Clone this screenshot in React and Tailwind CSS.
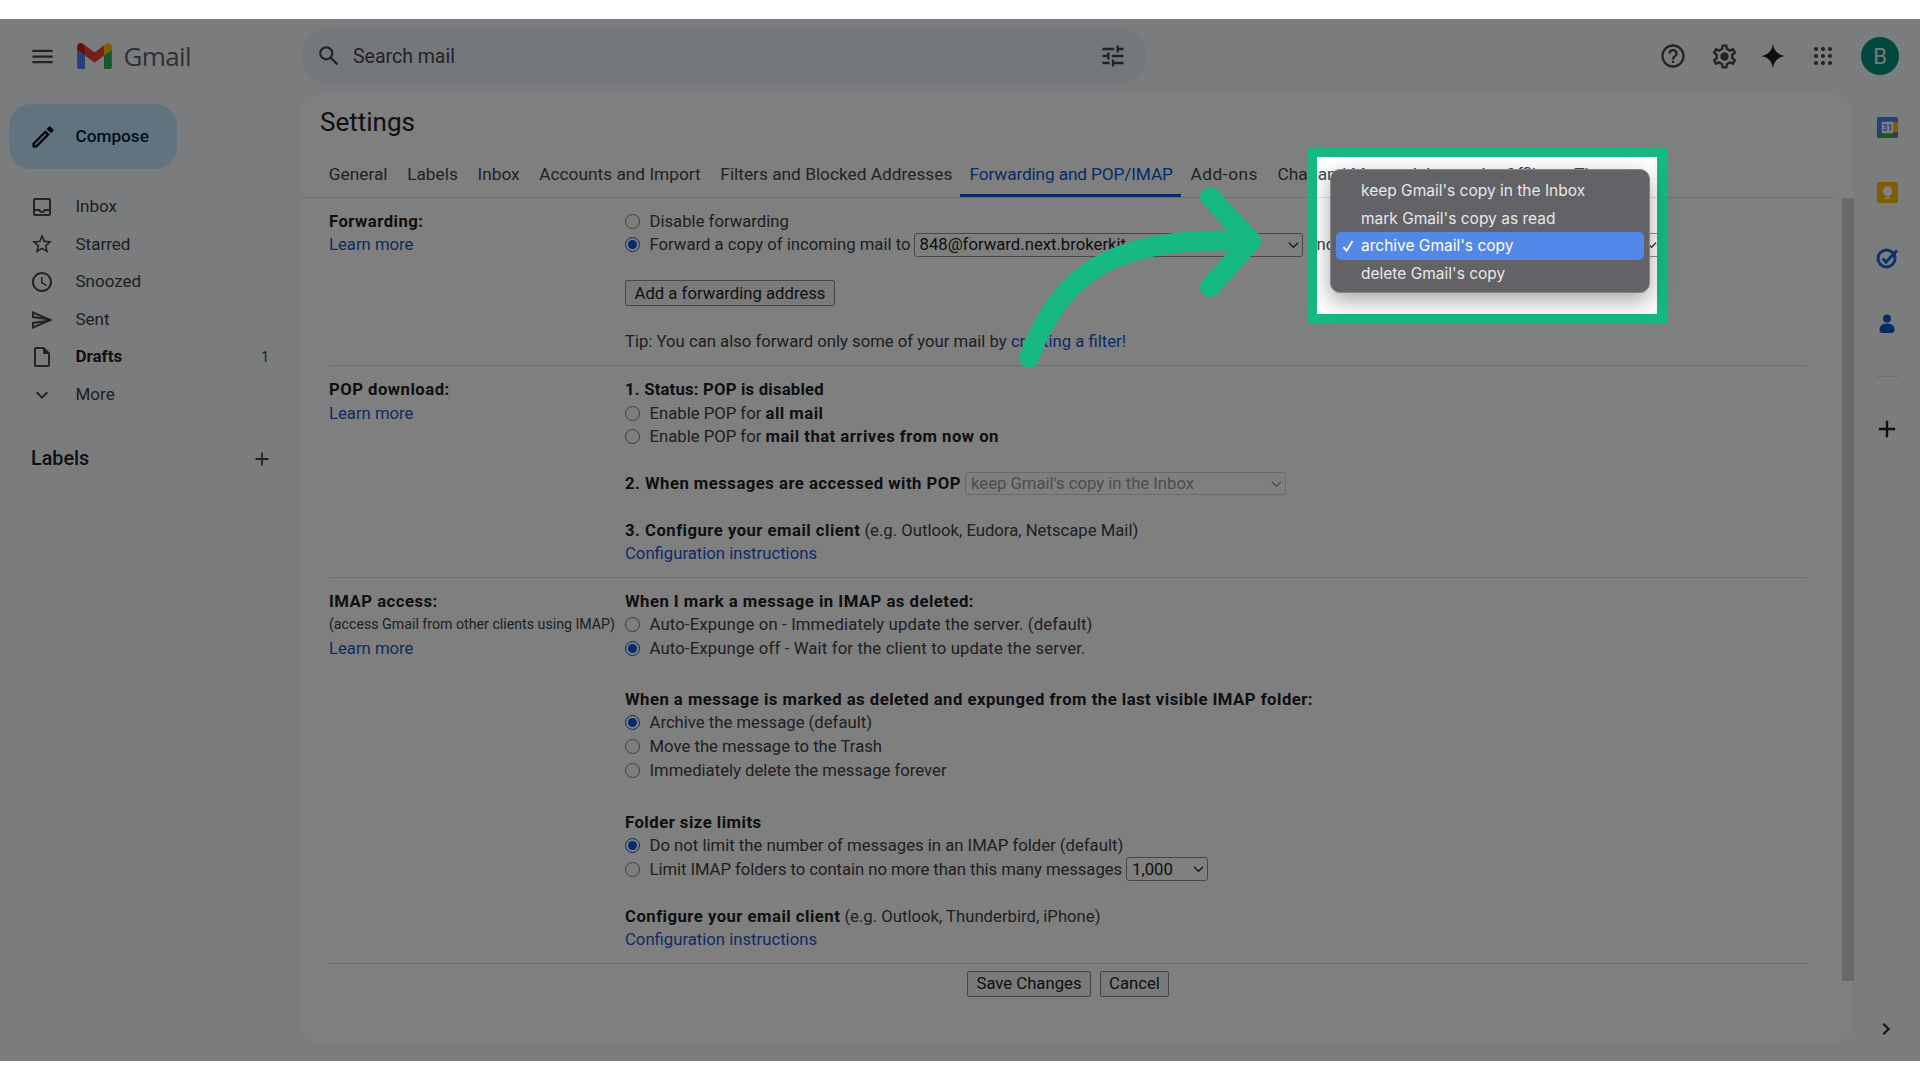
import React from "react";

const P = ({ d, className = "" }) => (
  <svg viewBox="0 0 24 24" className={className} fill="currentColor"><path d={d} /></svg>
);
const icons = {
  inbox: "M19 3H5c-1.1 0-2 .9-2 2v14c0 1.1.9 2 2 2h14c1.1 0 2-.9 2-2V5c0-1.1-.9-2-2-2zm0 16H5v-3h3.56c.69 1.19 1.97 2 3.45 2s2.75-.81 3.45-2H19v3zm0-5h-4.99c0 1.1-.9 2-2 2s-2-.9-2-2H5V5h14v9z",
  star: "M22 9.24l-7.19-.62L12 2 9.19 8.63 2 9.24l5.46 4.73L5.82 21 12 17.27 18.18 21l-1.63-7.03L22 9.24zM12 15.4l-3.76 2.27 1-4.28-3.32-2.88 4.38-.38L12 6.1l1.71 4.04 4.38.38-3.32 2.88 1 4.28L12 15.4z",
  clock: "M11.99 2C6.47 2 2 6.48 2 12s4.47 10 9.99 10C17.52 22 22 17.52 22 12S17.52 2 11.99 2zM12 20c-4.42 0-8-3.58-8-8s3.58-8 8-8 8 3.58 8 8-3.58 8-8 8zm.5-13H11v6l5.25 3.15.75-1.23-4.5-2.67z",
  send: "M4.01 6.03l7.51 3.22-7.52-1 .01-2.22m7.5 8.72L4 17.97v-2.22l7.51-1M2.01 3L2 10l15 2-15 2 .01 7L23 12 2.01 3z",
  draft: "M14 2H6c-1.1 0-1.99.9-1.99 2L4 20c0 1.1.89 2 1.99 2H18c1.1 0 2-.9 2-2V8l-6-6zM6 20V4h7v5h5v11H6z",
  more: "M16.59 8.59L12 13.17 7.41 8.59 6 10l6 6 6-6z",
  pencil: "M14.06 9.02l.92.92L5.92 19H5v-.92l9.06-9.06M17.66 3c-.25 0-.51.1-.7.29l-1.83 1.83 3.75 3.75 1.83-1.83c.39-.39.39-1.02 0-1.41l-2.34-2.34c-.2-.2-.45-.29-.71-.29zm-3.6 3.19L3 17.25V21h3.75L17.81 9.94l-3.75-3.75z",
  help: "M11 18h2v-2h-2v2zm1-16C6.48 2 2 6.48 2 12s4.48 10 10 10 10-4.48 10-10S17.52 2 12 2zm0 18c-4.41 0-8-3.59-8-8s3.59-8 8-8 8 3.59 8 8-3.59 8-8 8zm0-14c-2.21 0-4 1.79-4 4h2c0-1.1.9-2 2-2s2 .9 2 2c0 2-3 1.75-3 5h2c0-2.25 3-2.5 3-5 0-2.21-1.79-4-4-4z",
  gear: "M19.43 12.98c.04-.32.07-.64.07-.98 0-.34-.03-.66-.07-.98l2.11-1.65c.19-.15.24-.42.12-.64l-2-3.46c-.09-.16-.26-.25-.44-.25-.06 0-.12.01-.17.03l-2.49 1c-.52-.4-1.08-.73-1.69-.98l-.38-2.65C14.46 2.18 14.25 2 14 2h-4c-.25 0-.46.18-.49.42l-.38 2.65c-.61.25-1.17.59-1.69.98l-2.49-1c-.06-.02-.12-.03-.18-.03-.17 0-.34.09-.43.25l-2 3.46c-.13.22-.07.49.12.64l2.11 1.65c-.04.32-.07.65-.07.98 0 .33.03.66.07.98l-2.11 1.65c-.19.15-.24.42-.12.64l2 3.46c.09.16.26.25.44.25.06 0 .12-.01.17-.03l2.49-1c.52.4 1.08.73 1.69.98l.38 2.65c.03.24.24.42.49.42h4c.25 0 .46-.18.49-.42l.38-2.65c.61-.25 1.17-.59 1.69-.98l2.49 1c.06.02.12.03.18.03.17 0 .34-.09.43-.25l2-3.46c.12-.22.07-.49-.12-.64l-2.11-1.65zm-1.98-1.71c.04.31.05.52.05.73 0 .21-.02.43-.05.73l-.14 1.13.89.7 1.08.84-.7 1.21-1.27-.51-1.04-.42-.9.68c-.43.32-.84.56-1.25.73l-1.06.43-.16 1.13-.2 1.35h-1.4l-.19-1.35-.16-1.13-1.06-.43c-.43-.18-.83-.41-1.23-.71l-.91-.7-1.06.43-1.27.51-.7-1.21 1.08-.84.89-.7-.14-1.13c-.03-.31-.05-.54-.05-.74s.02-.43.05-.73l.14-1.13-.89-.7-1.08-.84.7-1.21 1.27.51 1.04.42.9-.68c.43-.32.84-.56 1.25-.73l1.06-.43.16-1.13.2-1.35h1.39l.19 1.35.16 1.13 1.06.43c.43.18.83.41 1.23.71l.91.7 1.06-.43 1.27-.51.7 1.21-1.07.85-.89.7.14 1.13zM12 8.5a3.5 3.5 0 100 7 3.5 3.5 0 000-7z",
  search: "M20.49 19l-5.73-5.73C15.53 12.2 16 10.91 16 9.5 16 5.91 13.09 3 9.5 3S3 5.91 3 9.5 5.91 16 9.5 16c1.41 0 2.7-.47 3.77-1.24L19 20.49 20.49 19zM5 9.5C5 7.01 7.01 5 9.5 5S14 7.01 14 9.5 11.99 14 9.5 14 5 11.99 5 9.5z",
  tune: "M3 17v2h6v-2H3zM3 5v2h10V5H3zm10 16v-2h8v-2h-8v-2h-2v6h2zM7 9v2H3v2h4v2h2V9H7zm14 4v-2H11v2h10zm-6-4h2V7h4V5h-4V3h-2v6z",
  star4: "M12 1.5C12.6 7.6 16.4 11.4 22.5 12 16.4 12.6 12.6 16.4 12 22.5 11.4 16.4 7.6 12.6 1.5 12 7.6 11.4 11.4 7.6 12 1.5z",
  plus: "M19 13h-6v6h-2v-6H5v-2h6V5h2v6h6v2z",
  menu: "M3 18h18v-2H3v2zm0-5h18v-2H3v2zm0-7v2h18V6H3z",
  chevR: "M8.59 16.59L13.17 12 8.59 7.41 10 6l6 6-6 6z",
};

const Chevron = ({ className = "" }) => (
  <svg viewBox="0 0 12 8" className={`w-[11px] h-[8px] ${className}`} fill="none" stroke="currentColor" strokeWidth="1.4"><path d="M1 1.5l5 5 5-5" /></svg>
);

const NavItem = ({ icon, label, bold, count }) => (
  <div className="flex items-center h-[37.6px] pl-[30px] pr-[32px] text-[17px] text-[#3c4043]">
    <span className="w-[24px] h-[24px] flex items-center justify-center mr-[21.5px]">
      <P d={icons[icon]} className="w-[24px] h-[24px] text-[#444746]" />
    </span>
    <span className={bold ? "font-bold text-[#202124]" : ""}>{label}</span>
    {count && <span className="ml-auto text-[14px]">{count}</span>}
  </div>
);

const Tab = ({ children, active, className = "px-[9.8px]" }) => (
  <div className={`pt-[5px] h-[46px] flex items-center border-b-[3px] ${className} ${active ? "border-[#0b57d0] text-[#0b57d0]" : "border-transparent text-[#444746]"}`}>
    {children}
  </div>
);

const Line = ({ children, className = "" }) => (
  <div className={`h-[23.6px] flex items-center whitespace-nowrap ${className}`}>{children}</div>
);
const Radio = ({ on, children, className = "" }) => (
  <Line className={className}>
    <span className={`w-[15px] h-[15px] rounded-full border shrink-0 flex items-center justify-center mr-[9.5px] bg-white ${on ? "border-[#0b57d0] border-[1.5px]" : "border-[#767676]"}`}>
      {on && <span className="w-[9px] h-[9px] rounded-full bg-[#0b57d0]" />}
    </span>
    {children}
  </Line>
);
const A = ({ children }) => <span className="text-[#1a56c4]">{children}</span>;
const B = ({ children, className = "tracking-[0.48px]" }) => <b className={`font-bold text-[#202124] ${className}`}>{children}</b>;
const Select = ({ w, children, disabled }) => (
  <div className={`${w} h-[23.6px] border rounded-[3px] flex items-center justify-between pl-[5px] pr-[3px] overflow-hidden whitespace-nowrap shrink-0 tracking-normal ${disabled ? "border-[#d4d4d4] text-[#9a9a9a]" : "border-[#8f8f8f] text-[#202124]"}`}>
    <span>{children}</span>
    <Chevron className={`shrink-0 ${disabled ? "text-[#9a9a9a]" : "text-[#333]"}`} />
  </div>
);
const Btn = ({ w, children, className = "" }) => (
  <div className={`${w} h-[26px] border border-[#8a8a8a] rounded-[2px] bg-[#f5f5f5] flex items-center justify-center text-[#202124] ${className}`}>{children}</div>
);
const Section = ({ left, children, className = "pb-[11.5px]" }) => (
  <div className={`flex border-b border-[#e0e0e0] pt-[11.5px] ${className}`}>
    <div className="w-[296px] shrink-0">{left}</div>
    <div className="flex-1 min-w-0">{children}</div>
  </div>
);
const RailIcon = ({ children, className = "" }) => (
  <div className={`w-[24px] h-[24px] flex items-center justify-center ${className}`}>{children}</div>
);

export default function App() {
  return (
    <div className="relative h-screen w-full overflow-hidden bg-white font-['Roboto',sans-serif]">
      <div className="mt-[18.5px] h-[1042.5px] bg-[#f6f8fc] flex flex-col">
        {/* header */}
        <header className="h-[75.5px] shrink-0 flex items-center">
          <div className="w-[301px] shrink-0 flex items-center pl-[28.5px]">
            <P d={icons.menu} className="w-[27px] h-[27px] text-[#444746]" />
            <svg viewBox="52 42 88 66" className="ml-[21px] w-[35px] h-[26px]">
              <path fill="#4285f4" d="M58 108h14V74L52 59v43c0 3.32 2.69 6 6 6" />
              <path fill="#34a853" d="M120 108h14c3.32 0 6-2.69 6-6V59l-20 15" />
              <path fill="#fbbc04" d="M120 48v26l20-15v-8c0-7.42-8.47-11.65-14.4-7.2" />
              <path fill="#ea4335" d="M72 74V48l24 18 24-18v26L96 92" />
              <path fill="#c5221f" d="M52 51v8l20 15V48l-5.6-4.2c-5.94-4.45-14.4-.22-14.4 7.2" />
            </svg>
            <span className="ml-[12px] pt-[1px] text-[26px] text-[#5f6368] font-['Open_Sans',sans-serif] tracking-[-0.6px]">Gmail</span>
          </div>
          <div className="w-[846px] h-[56px] rounded-full bg-[#e9eef6] flex items-center pl-[15px] pr-[20px] text-[#444746]">
            <P d={icons.search} className="w-[26px] h-[26px]" />
            <span className="ml-[11px] text-[19.5px]">Search mail</span>
            <P d={icons.tune} className="ml-auto w-[28px] h-[28px]" />
          </div>
          <div className="flex-1 relative flex items-center text-[#444746]">
            <P d={icons.help} className="ml-[512px] w-[28px] h-[28px]" />
            <P d={icons.gear} className="ml-[23px] w-[29px] h-[29px]" />
            <P d={icons.star4} className="ml-[22px] w-[24px] h-[24px] text-[#1f1f1f] scale-[1.2]" />
            <svg viewBox="0 0 20 20" className="ml-[28px] w-[20px] h-[20px]" fill="currentColor">
              {[3, 10, 17].flatMap((y) => [3, 10, 17].map((x) => <circle key={`${x}-${y}`} cx={x} cy={y} r="2.1" />))}
            </svg>
            <div className="ml-[28px] w-[38px] h-[38px] rounded-full bg-[#00907a] text-[#f0f0f0] flex items-center justify-center text-[22px]">B</div>
          </div>
        </header>

        <div className="flex-1 flex min-h-0">
          {/* sidebar */}
          <aside className="w-[301px] shrink-0 pt-[10px]">
            <div className="ml-[9px] w-[168px] h-[65px] rounded-[22px] bg-[#c2e7ff] flex items-center pl-[21px] text-[#001d35] text-[17.2px] font-medium">
              <P d={icons.pencil} className="w-[28px] h-[28px] text-black -ml-[1px]" />
              <span className="ml-[18.5px]">Compose</span>
            </div>
            <nav className="mt-[19px]">
              <NavItem icon="inbox" label="Inbox" />
              <NavItem icon="star" label="Starred" />
              <NavItem icon="clock" label="Snoozed" />
              <NavItem icon="send" label="Sent" />
              <NavItem icon="draft" label="Drafts" bold count="1" />
              <NavItem icon="more" label="More" />
            </nav>
            <div className="mt-[30px] h-[30px] pl-[31px] pr-[28px] flex items-center justify-between text-[19.8px] font-medium text-[#202124]">
              <span>Labels</span>
              <P d={icons.plus} className="w-[22px] h-[22px] text-[#444746]" />
            </div>
          </aside>

          {/* panel */}
          <main className="w-[1553px] h-[949px] shrink-0 rounded-[20px] bg-white flex flex-col">
            <h1 className="pl-[19px] pt-[12px] h-[44px] text-[26px] leading-[32px] text-[#202124]">Settings</h1>
            <div className="mt-[13px] pl-[18px] flex text-[17.3px] border-b border-[#e0e0e0] h-[47px] whitespace-nowrap mr-[19px] overflow-hidden">
              <Tab>General</Tab>
              <Tab>Labels</Tab>
              <Tab>Inbox</Tab>
              <Tab>Accounts and Import</Tab>
              <Tab className="pl-[9.8px] pr-[7.4px]">Filters and Blocked Addresses</Tab>
              <Tab active className="pl-[9.8px] pr-[8px] tracking-[-0.15px]">Forwarding and POP/IMAP</Tab>
              <Tab className="px-[9.8px] tracking-[0.5px]">Add-ons</Tab>
              <Tab>Chat and Meet</Tab>
              <Tab>Advanced</Tab>
              <Tab>Offline</Tab>
              <Tab>Themes</Tab>
            </div>
            <div className="flex-1 flex min-h-0">
              <div className="flex-1 pl-[28px] pr-[35px] text-[16.7px] text-[#3c4043]">
                <Section className="pb-[12px]" left={<><Line><B>Forwarding:</B></Line><Line><A>Learn more</A></Line></>}>
                  <Radio>Disable forwarding</Radio>
                  <Radio on>
                    Forward a copy of incoming mail to
                    <span className="ml-[3px]" />
                    <Select w="w-[389px]">848@forward.next.brokerkit.com (Dual copy)</Select>
                    <span className="ml-[5px]">and</span>
                    <span className="ml-[4px]" />
                    <Select w="w-[322px]">archive Gmail's copy</Select>
                  </Radio>
                  <Btn w="w-[210px]" className="mt-[23.5px]">Add a forwarding address</Btn>
                  <Line className="mt-[23.5px]">Tip: You can also forward only some of your mail by&nbsp;<A>creating a filter!</A></Line>
                </Section>
                <Section left={<><Line><B>POP download:</B></Line><Line><A>Learn more</A></Line></>}>
                  <Line><B className="tracking-[0.2px]">1. Status: POP is disabled</B></Line>
                  <Radio>Enable POP for&nbsp;<B>all mail</B></Radio>
                  <Radio>Enable POP for&nbsp;<B>mail that arrives from now on</B></Radio>
                  <Line className="mt-[23.2px]"><B>2. When messages are accessed with POP</B><span className="ml-[4px]" /><Select w="w-[321px]" disabled>keep Gmail's copy in the Inbox</Select></Line>
                  <Line className="mt-[23px]"><B>3. Configure your email client</B>&nbsp;(e.g. Outlook, Eudora, Netscape Mail)</Line>
                  <Line><A>Configuration instructions</A></Line>
                </Section>
                <Section className="pb-[11px]" left={<><Line><B>IMAP access:</B></Line><Line className="text-[14.2px]">(access Gmail from other clients using IMAP)</Line><Line><A>Learn more</A></Line></>}>
                  <Line><B>When I mark a message in IMAP as deleted:</B></Line>
                  <Radio className="tracking-[0.15px]">Auto-Expunge on - Immediately update the server. (default)</Radio>
                  <Radio on className="tracking-[0.15px]">Auto-Expunge off - Wait for the client to update the server.</Radio>
                  <Line className="mt-[27.2px]"><B>When a message is marked as deleted and expunged from the last visible IMAP folder:</B></Line>
                  <Radio on>Archive the message (default)</Radio>
                  <Radio>Move the message to the Trash</Radio>
                  <Radio>Immediately delete the message forever</Radio>
                  <Line className="mt-[28.4px]"><B>Folder size limits</B></Line>
                  <Radio on>Do not limit the number of messages in an IMAP folder (default)</Radio>
                  <Radio className="tracking-[-0.06px]">Limit IMAP folders to contain no more than this many messages<span className="ml-[4px]" /><Select w="w-[82px]">1,000</Select></Radio>
                  <Line className="mt-[23.5px]"><B>Configure your email client</B>&nbsp;(e.g. Outlook, Thunderbird, iPhone)</Line>
                  <Line><A>Configuration instructions</A></Line>
                </Section>
                <div className="mt-[7px] flex justify-center gap-[9px]">
                  <Btn w="w-[124px]">Save Changes</Btn>
                  <Btn w="w-[69px]">Cancel</Btn>
                </div>
              </div>
              <div className="w-[12px] h-[783px] shrink-0 bg-[#d2d2d2]" />
            </div>
          </main>

          {/* right rail */}
          <aside className="flex-1 relative flex flex-col items-center pt-[21px]">
            <RailIcon>
              <svg viewBox="0 0 24 24" className="w-[23px] h-[23px]">
                <rect x="1" y="1" width="22" height="22" rx="2" fill="#4285f4" />
                <path d="M18 6h5v11h-5z" fill="#fbbc04" />
                <path d="M1 18h17v5H3a2 2 0 01-2-2z" fill="#34a853" />
                <path d="M18 18h5l-5 5z" fill="#ea4335" />
                <rect x="6" y="6" width="12" height="12" fill="#fff" />
                <text x="12" y="15.5" textAnchor="middle" fontSize="9" fontWeight="700" fill="#4285f4" fontFamily="Roboto">31</text>
              </svg>
            </RailIcon>
            <RailIcon className="mt-[41px]">
              <svg viewBox="0 0 24 24" className="w-[23px] h-[23px]">
                <rect x="1" y="1" width="22" height="22" rx="2" fill="#fbbc04" />
                <circle cx="12" cy="10.5" r="5" fill="#fff" />
                <rect x="9.5" y="13" width="5" height="3" fill="#fff" />
                <rect x="9.5" y="17" width="5" height="1.6" fill="#fff" />
              </svg>
            </RailIcon>
            <RailIcon className="mt-[42px]">
              <svg viewBox="0 0 24 24" className="w-[24px] h-[24px]" fill="none">
                <circle cx="11.5" cy="12.5" r="8.5" stroke="#1a66d9" strokeWidth="3" />
                <path d="M7.5 12.5l3.5 3.5 11-11.5" stroke="#1a66d9" strokeWidth="3" />
              </svg>
            </RailIcon>
            <RailIcon className="mt-[42px]">
              <svg viewBox="0 0 24 24" className="w-[24px] h-[24px]" fill="#0b57d0">
                <circle cx="12" cy="6.5" r="4" />
                <path d="M4.5 18c0-4 2.5-6.5 7.5-6.5s7.5 2.5 7.5 6.5c0 2-1.5 3-3 3h-9c-1.5 0-3-1-3-3z" />
              </svg>
            </RailIcon>
            <div className="mt-[40px] w-[23px] h-px bg-[#e0e0e0]" />
            <P d={icons.plus} className="mt-[38px] w-[28px] h-[28px] text-[#1f1f1f]" />
            <P d={icons.chevR} className="absolute bottom-[20px] left-[20px] w-[24px] h-[24px] text-[#1f1f1f]" />
          </aside>
        </div>
      </div>

      {/* dim layer with a window cut around the dropdown */}
      <div className="absolute left-0 top-[18.5px] w-full h-[1042.5px] overflow-hidden pointer-events-none">
        <div className="absolute left-[1307px] top-[128.5px] w-[360px] h-[177px] box-border border-[10px] border-[#16b981] shadow-[0_0_0_2500px_rgba(0,0,0,0.5)]" />
      </div>

      {/* curved arrow */}
      <svg className="absolute left-0 top-0 w-[1920px] h-[1080px] pointer-events-none" viewBox="0 0 1920 1080" fill="none" stroke="#16b981" strokeWidth="20" strokeLinecap="round" strokeLinejoin="round">
        <path d="M1029 358C1060 270 1120 235 1245 241" />
        <path d="M1210 197L1251 241L1210 287" />
      </svg>

      {/* native-style dropdown */}
      <div className="absolute left-[1330px] top-[169px] w-[320px] h-[124px] rounded-[10px] bg-[#626267] border border-[#85858a] px-[5px] py-[7px] text-[15.5px] text-[#e8e8e8] font-['Inter',sans-serif] shadow-[0_8px_22px_rgba(0,0,0,0.35)]">
        {["keep Gmail's copy in the Inbox", "mark Gmail's copy as read", "archive Gmail's copy", "delete Gmail's copy"].map((t, i) => (
          <div key={t} className={`relative h-[27.5px] pl-[25px] flex items-center rounded-[5px] ${i === 2 ? "bg-[#5488e8] text-white" : ""}`}>
            {i === 2 && (
              <svg viewBox="0 0 14 14" className="absolute left-[5px] top-[7px] w-[14px] h-[14px]" fill="none" stroke="#fff" strokeWidth="1.8"><path d="M2.5 8l3 4 6-10" /></svg>
            )}
            {t}
          </div>
        ))}
      </div>
    </div>
  );
}
